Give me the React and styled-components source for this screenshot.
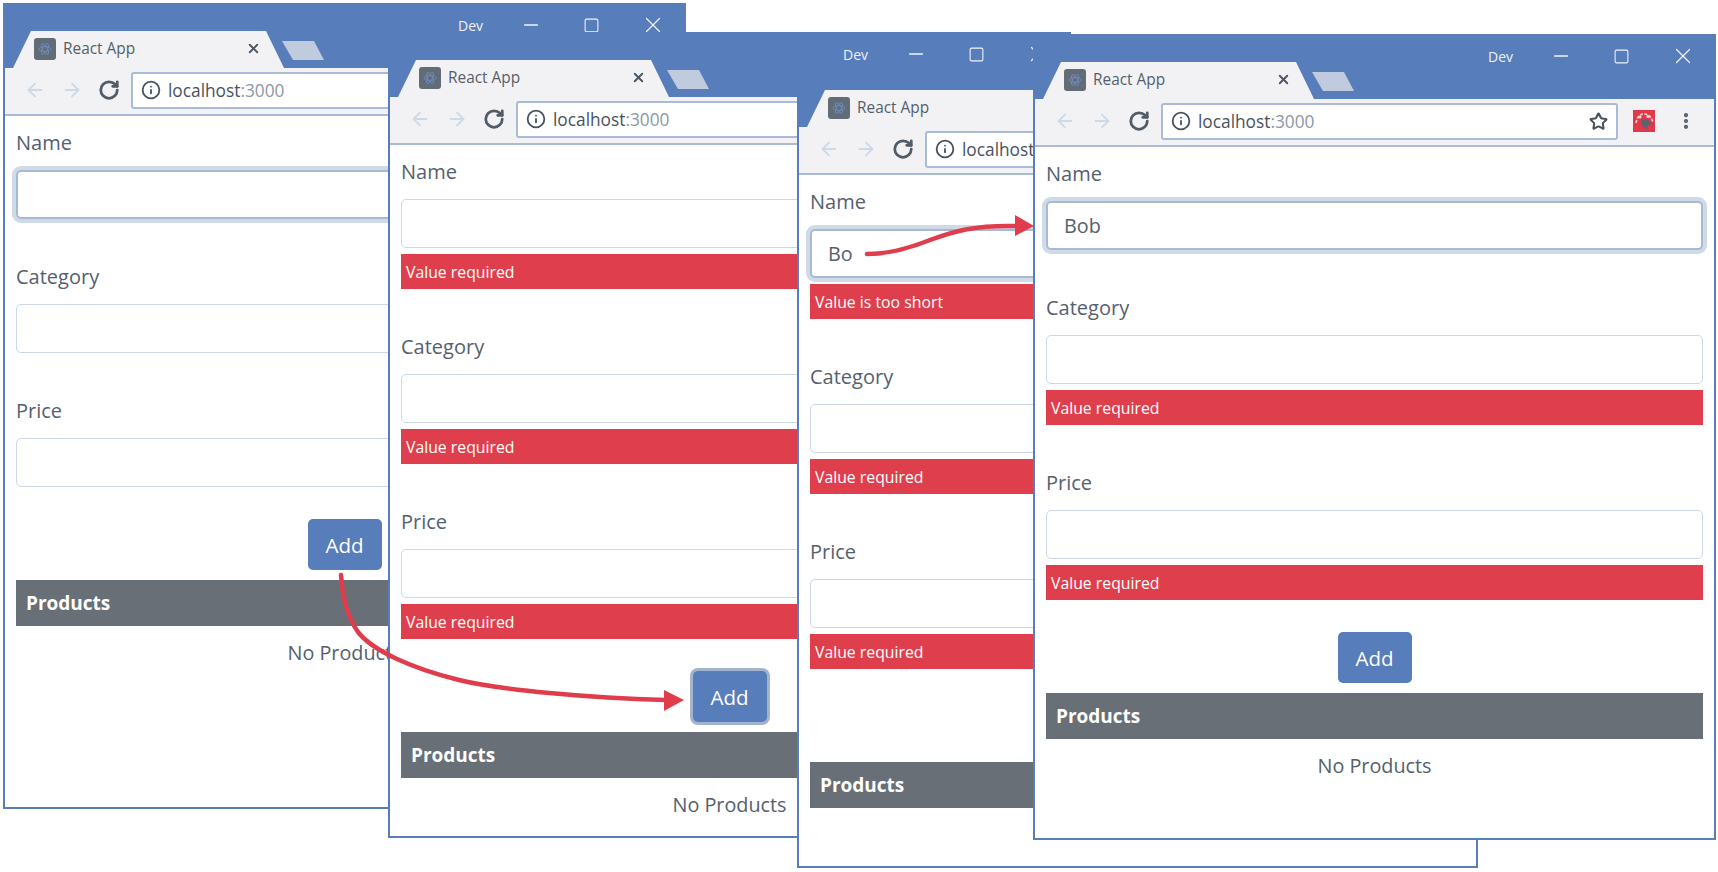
import React from 'react';
import styled, { createGlobalStyle } from 'styled-components';
import { ArrowLeft, ArrowRight, RotateCw, Info, Star, MoreVertical, X, Minus, Square } from 'lucide-react';

const Global = createGlobalStyle`
  html, body { margin: 0; padding: 0; background: #fff; }
  body { font-family: "Open Sans", "Noto Sans", sans-serif; color: #55606e; }
  #root { width: 1718px; height: 872px; overflow: hidden; }
`;

const Desktop = styled.div`
  position: relative;
  width: 1718px;
  height: 872px;
  overflow: hidden;
  background: #fff;
`;

const Win = styled.div`
  position: absolute;
  left: ${(p) => p.$left}px;
  top: ${(p) => p.$top}px;
  width: ${(p) => p.$width}px;
  height: 806px;
  box-sizing: border-box;
  border: 2px solid #587dbb;
  background: #fff;
  display: flex;
  flex-direction: column;
  overflow: hidden;
`;

const TitleBar = styled.div`
  position: relative;
  height: 63px;
  flex: none;
  background: #587dbb;
  display: flex;
  align-items: flex-end;
  padding-left: 8px;
`;

const Tab = styled.div`
  width: 271px;
  height: 37px;
  box-sizing: border-box;
  background: #f2f1f3;
  clip-path: polygon(0 100%, 18px 0, 253px 0, 100% 100%);
  display: flex;
  align-items: center;
  padding: 0 23px 2px 21px;
`;

const Favicon = styled.div`
  width: 22px;
  height: 22px;
  border-radius: 3px;
  background: #626c77;
  display: flex;
  align-items: center;
  justify-content: center;
  flex: none;
`;

const TabTitle = styled.span`
  margin-left: 7px;
  font-size: 15.4px;
  color: #545f6c;
  white-space: nowrap;
`;

const TabClose = styled.span`
  margin-left: auto;
  display: flex;
  color: #4b5563;
`;

const NewTab = styled.div`
  width: 42px;
  height: 19px;
  margin: 0 0 8px -2px;
  background: #c1cbde;
  clip-path: polygon(0 0, 32px 0, 100% 100%, 11px 100%);
`;

const Controls = styled.div`
  margin-left: auto;
  align-self: flex-start;
  display: flex;
  align-items: center;
  height: 14px;
  margin-top: 13px;
  padding-right: 24px;
  color: #f1f3f8;
`;

const Channel = styled.span`
  font-size: 14px;
  margin-right: 40px;
  color: #eef0f5;
`;

const Ctl = styled.span`
  display: flex;
  width: 15px;
  justify-content: center;
  margin-left: ${(p) => p.$gap || 0}px;
  svg { flex: none; }
`;

const Toolbar = styled.div`
  height: 48px;
  flex: none;
  box-sizing: border-box;
  background: #f2f1f3;
  border-bottom: 2px solid #a9bbd8;
  display: flex;
  align-items: center;
  padding: 0 18px 2px 19px;
`;

const Nav = styled.span`
  display: flex;
  color: ${(p) => (p.$dim ? '#cdd8e9' : '#515c68')};
  margin-right: ${(p) => p.$gap}px;
`;

const Omni = styled.div`
  flex: 1;
  min-width: 0;
  height: 37px;
  box-sizing: border-box;
  background: #fff;
  border: 2px solid #a9bbd8;
  border-radius: 3px;
  display: flex;
  align-items: center;
  padding: 0 8px;
  font-size: 17.3px;
  color: #47525f;
`;

const Url = styled.span`
  margin-left: 7px;
  white-space: nowrap;
  span { color: #8c97a5; }
`;

const OmniStar = styled.span`
  margin-left: auto;
  display: flex;
  color: #47525f;
`;

const Ext = styled.span`
  display: flex;
  margin-left: 15px;
`;

const Dots = styled.span`
  display: flex;
  margin-left: 21px;
  color: #515c68;
`;

const Content = styled.div`
  flex: 1;
  padding: 15px 11px 0;
  display: flex;
  flex-direction: column;
`;

const Group = styled.div`
  margin-bottom: 46px;
  &:nth-of-type(3) { margin-bottom: 32px; }
`;

const Label = styled.div`
  font-size: 20px;
  line-height: 24px;
  margin: 0 0 15px 0;
  color: #55606e;
`;

const Field = styled.div`
  height: 49px;
  box-sizing: border-box;
  background: #fff;
  border-radius: 5px;
  border: ${(p) => (p.$focus ? '2px solid #a9b9d3' : '1px solid #cdd7e8')};
  box-shadow: ${(p) => (p.$focus ? '0 0 0 4px #d0d9e8' : 'none')};
  padding: 0 16px;
  display: flex;
  align-items: center;
  font-size: 19.8px;
  color: #55606e;
`;

const Err = styled.div`
  margin-top: 6px;
  height: 35px;
  box-sizing: border-box;
  background: #df3f4c;
  color: #fff;
  font-size: 15.8px;
  display: flex;
  align-items: center;
  padding-left: 5px;
`;

const ButtonRow = styled.div`
  display: flex;
  justify-content: center;
  margin-bottom: 10px;
`;

const AddButton = styled.div`
  width: 74px;
  height: 51px;
  box-sizing: border-box;
  border-radius: 5px;
  background: #587dbb;
  color: #fff;
  font-size: 20.5px;
  display: flex;
  align-items: center;
  justify-content: center;
  box-shadow: ${(p) => (p.$focus ? '0 0 0 3px #a4b3cc' : 'none')};
`;

const ProductsBar = styled.div`
  height: 46px;
  background: #686f77;
  color: #fff;
  font-size: 19px;
  font-weight: 700;
  display: flex;
  align-items: center;
  padding-left: 10px;
`;

const Empty = styled.div`
  margin-top: 15px;
  text-align: center;
  font-size: 19.8px;
  line-height: 24px;
  color: #55606e;
`;

const Arrows = styled.svg`
  position: absolute;
  left: 0;
  top: 0;
  pointer-events: none;
`;

function ReactIcon() {
  return (
    <svg width="14" height="14" viewBox="0 0 14 14" fill="none" stroke="#6f8fc8" strokeWidth="0.8">
      <ellipse cx="7" cy="7" rx="6" ry="2.4" />
      <ellipse cx="7" cy="7" rx="6" ry="2.4" transform="rotate(60 7 7)" />
      <ellipse cx="7" cy="7" rx="6" ry="2.4" transform="rotate(120 7 7)" />
    </svg>
  );
}

function ExtIcon() {
  return (
    <svg width="22" height="22" viewBox="0 0 22 22">
      <rect width="22" height="22" fill="#e0394a" />
      <path
        d="M3 13C4 8 6 4 11 4s8 4 9 9"
        fill="none"
        stroke="#f6d5d8"
        strokeWidth="1.6"
        strokeDasharray="3 1.5"
      />
      <circle cx="7" cy="7" r="1.6" fill="#f6d5d8" />
      <circle cx="15" cy="6.5" r="1.6" fill="#f6d5d8" />
      <path d="M8 9h6l5 5-4 1-1 4-3-1-3-4z" fill="#5a6570" />
    </svg>
  );
}

function BrowserWindow({ left, top, width, fields, focus, focusAdd, hideEmpty }) {
  return (
    <Win $left={left} $top={top} $width={width}>
      <TitleBar>
        <Tab>
          <Favicon><ReactIcon /></Favicon>
          <TabTitle>React App</TabTitle>
          <TabClose><X size={15} strokeWidth={3} /></TabClose>
        </Tab>
        <NewTab />
        <Controls>
          <Channel>Dev</Channel>
          <Ctl><Minus size={22} strokeWidth={1.4} /></Ctl>
          <Ctl $gap={46}><Square size={17} strokeWidth={1.5} /></Ctl>
          <Ctl $gap={46}><X size={26} strokeWidth={1.1} /></Ctl>
        </Controls>
      </TitleBar>
      <Toolbar>
        <Nav $dim $gap={15}><ArrowLeft size={22} strokeWidth={2} /></Nav>
        <Nav $dim $gap={15}><ArrowRight size={22} strokeWidth={2} /></Nav>
        <Nav $gap={11}><RotateCw size={22} strokeWidth={3} /></Nav>
        <Omni>
          <Info size={20} strokeWidth={2.2} />
          <Url>localhost<span>:3000</span></Url>
          <OmniStar><Star size={19} strokeWidth={2.6} /></OmniStar>
        </Omni>
        <Ext><ExtIcon /></Ext>
        <Dots><MoreVertical size={20} strokeWidth={3} /></Dots>
      </Toolbar>
      <Content>
        {fields.map((f, i) => (
          <Group key={f.label}>
            <Label>{f.label}</Label>
            <Field $focus={focus && i === 0}>{f.value}</Field>
            {f.error && <Err>{f.error}</Err>}
          </Group>
        ))}
        <ButtonRow>
          <AddButton $focus={focusAdd}>Add</AddButton>
        </ButtonRow>
        <ProductsBar>Products</ProductsBar>
        {!hideEmpty && <Empty>No Products</Empty>}
      </Content>
    </Win>
  );
}

const blank = [{ label: 'Name' }, { label: 'Category' }, { label: 'Price' }];
const required = 'Value required';
const windows = [
  { left: 3, top: 3, width: 683, fields: blank, focus: true },
  {
    left: 388,
    top: 32,
    width: 683,
    focusAdd: true,
    fields: blank.map((f) => ({ ...f, error: required })),
  },
  {
    left: 797,
    top: 62,
    width: 681,
    focus: true,
    hideEmpty: true,
    fields: [
      { label: 'Name', value: 'Bo', error: 'Value is too short' },
      { label: 'Category', error: required },
      { label: 'Price', error: required },
    ],
  },
  {
    left: 1033,
    top: 34,
    width: 683,
    focus: true,
    fields: [
      { label: 'Name', value: 'Bob' },
      { label: 'Category', error: required },
      { label: 'Price', error: required },
    ],
  },
];

export default function App() {
  return (
    <Desktop>
      <Global />
      {windows.map((w) => (
        <BrowserWindow key={w.left} {...w} />
      ))}
      <Arrows width="1718" height="872" viewBox="0 0 1718 872">
        <path
          d="M341 575C343 600 347 616 358 632C372 650 410 668 459 680C500 690 590 698 666 700"
          fill="none"
          stroke="#e03d4c"
          strokeWidth="4.5"
          strokeLinecap="round"
        />
        <polygon points="664,690 684,700 664,711" fill="#e03d4c" />
        <path
          d="M867 254C885 254 905 250 930 240C955 231 975 225 1016 226"
          fill="none"
          stroke="#e03d4c"
          strokeWidth="4.5"
          strokeLinecap="round"
        />
        <polygon points="1015,215 1034,226 1015,236" fill="#e03d4c" />
      </Arrows>
    </Desktop>
  );
}
